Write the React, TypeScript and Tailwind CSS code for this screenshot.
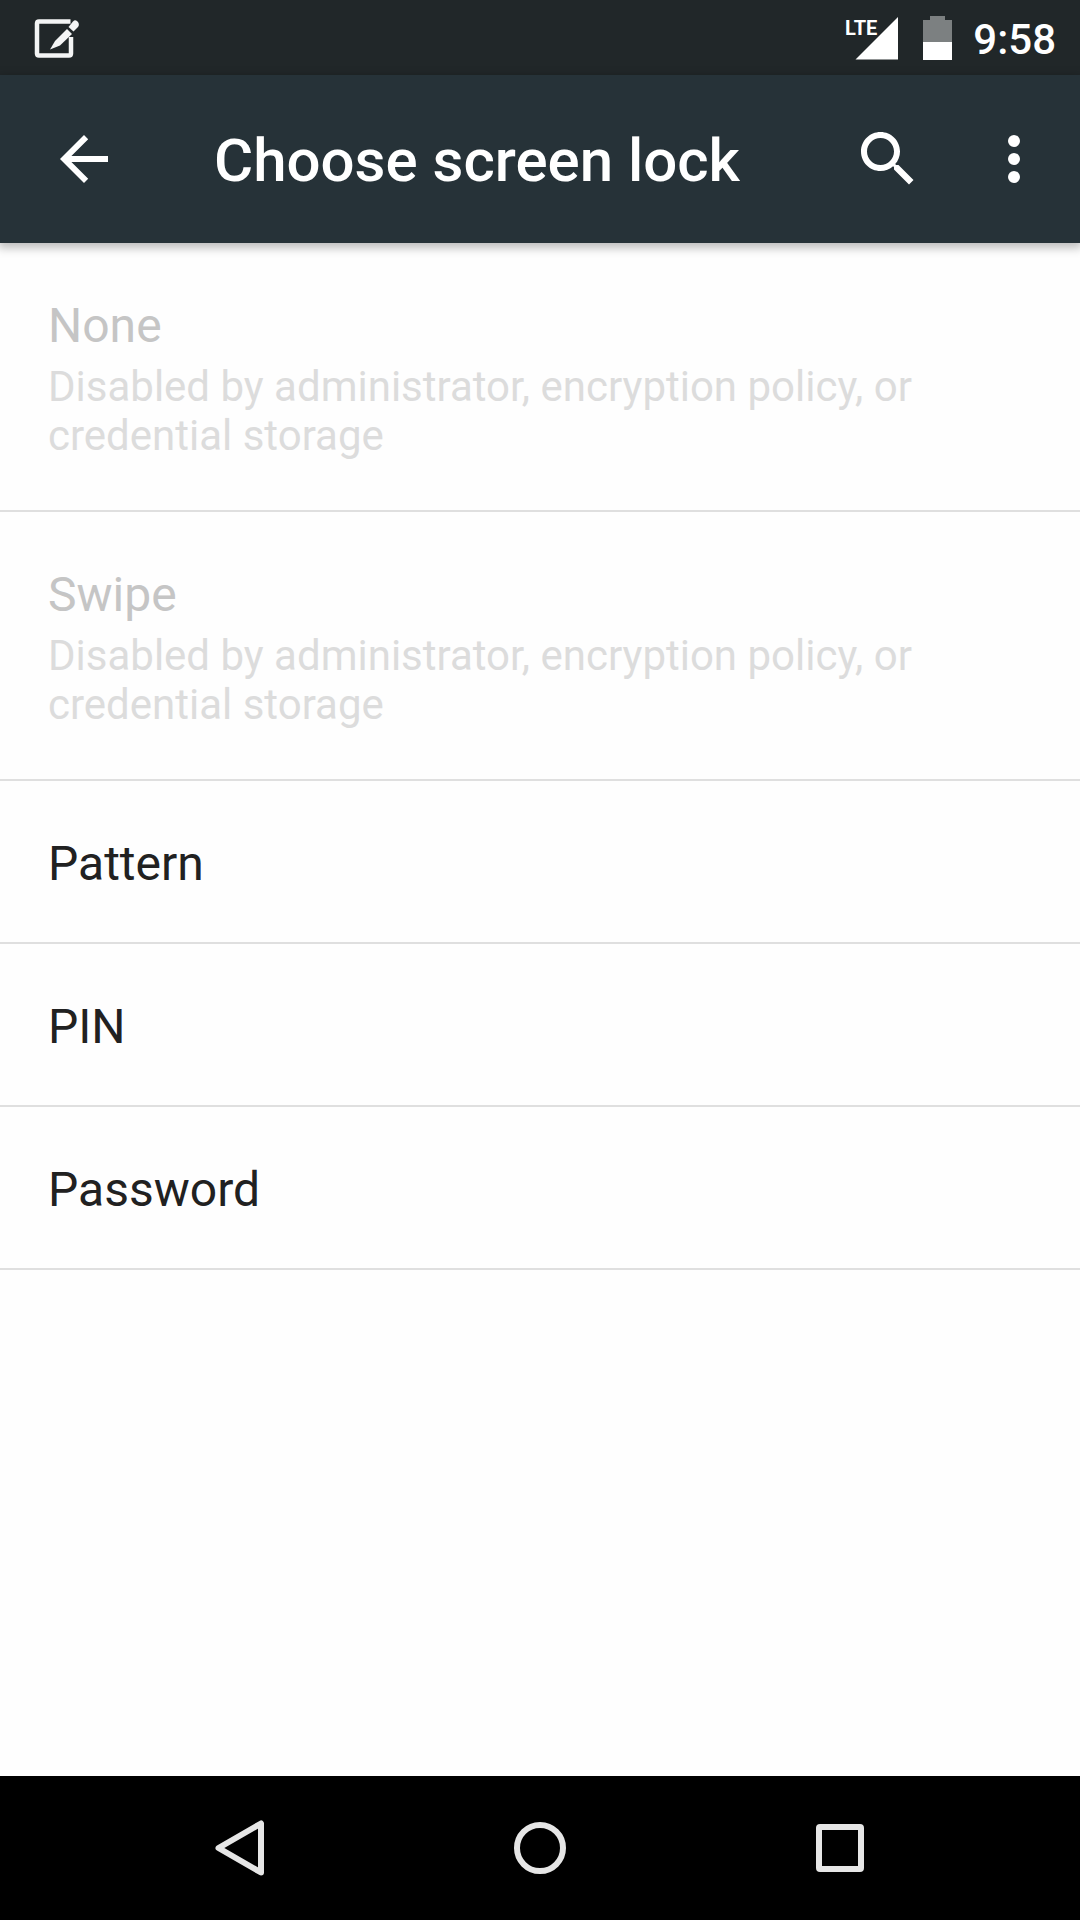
import { useState } from 'react';

const options = [
  { title: 'None', disabled: true },
  { title: 'Swipe', disabled: true },
  { title: 'Pattern', disabled: false },
  { title: 'PIN', disabled: false },
  { title: 'Password', disabled: false },
];

function StatusBar() {
  return (
    <div className="flex h-[75px] shrink-0 items-center justify-between bg-[#212729] pl-[30px] pr-6 text-white">
      <EditIcon />
      <div className="flex items-center">
        <span className="-mr-[22px] mb-[20px] text-[20px] leading-none font-bold">LTE</span>
        <SignalIcon />
        <BatteryIcon />
        <span className="ml-[21px] pt-1 text-[42px] leading-[49px] font-medium">9:58</span>
      </div>
    </div>
  );
}

function EditIcon() {
  return (
    <svg className="size-[54px]" viewBox="0 0 54 54" fill="none">
      <path
        d="M40.5 10.5H9Q7 10.5 7 12.5V42.5Q7 44.5 9 44.5H39Q41 44.5 41 42.5V26"
        stroke="#f4f5f5"
        strokeWidth="4.5"
      />
      <path d="M20 38.500L25 30L37 18L42 23L30 34.500Z" fill="#f4f5f5" />
      <path d="M38.500 16L43 10.500Q45.500 8 48 11Q50 14 47.500 16.500L43.500 20.500Z" fill="#f4f5f5" />
    </svg>
  );
}

function SignalIcon() {
  return (
    <svg className="h-[44px] w-[44px]" viewBox="0 0 44 44">
      <path d="M0.5 43.5H43V1Z" fill="white" />
    </svg>
  );
}

function BatteryIcon() {
  return (
    <svg className="ml-6 h-[44px] w-[29px]" viewBox="0 0 29 44">
      <path d="M7 0H22V4H29V26H0V4H7Z" fill="#7c8081" />
      <path d="M0 26H29V44H0Z" fill="white" />
    </svg>
  );
}

function AppBar() {
  return (
    <header className="z-10 flex h-[168px] shrink-0 items-center bg-[#263238] pl-12 pr-[30px] text-white shadow-[0_3px_9px_2px_rgba(0,0,0,0.26)]">
      <button aria-label="Back">
        <svg className="size-[72px]" viewBox="0 0 24 24" fill="currentColor">
          <path d="M20 11H7.8l5.6-5.6L12 4l-8 8 8 8 1.4-1.4L7.8 13H20v-2z" />
        </svg>
      </button>
      <h1 className="ml-[94px] flex-1 pt-1 text-[60px] leading-[70px] font-medium">
        Choose screen lock
      </h1>
      <button aria-label="Search">
        <svg className="size-[72px]" viewBox="0 0 24 24" fill="currentColor">
          <path d="M15.5 14h-.8l-.3-.3c1-1.100 1.600-2.600 1.600-4.200C16 5.900 13.100 3 9.500 3S3 5.900 3 9.500 5.900 16 9.500 16c1.600 0 3.100-.6 4.200-1.600l.3.3v.8l5 5 1.500-1.500-5-5zm-6 0C7 14 5 12 5 9.500S7 5 9.500 5 14 7 14 9.500 12 14 9.500 14z" />
        </svg>
      </button>
      <button aria-label="More options" className="ml-[54px]">
        <svg className="size-[72px]" viewBox="0 0 24 24" fill="currentColor">
          <circle cx="12" cy="6" r="2" />
          <circle cx="12" cy="12" r="2" />
          <circle cx="12" cy="18" r="2" />
        </svg>
      </button>
    </header>
  );
}

function LockOption({
  title,
  disabled,
  onClick,
}: {
  title: string;
  disabled: boolean;
  onClick: () => void;
}) {
  return (
    <li className="border-b-2 border-[#dfdfdf]">
      <button
        disabled={disabled}
        onClick={onClick}
        className="block w-full px-12 pt-[55px] pb-[50px] text-left text-[#212121] disabled:text-[#c5c5c5]"
      >
        <span className="block text-[48px] leading-[56px]">{title}</span>
        {disabled && (
          <span className="mt-2 block text-[42px] leading-[49px] text-[#dcdcdc]">
            Disabled by administrator, encryption policy, or credential storage
          </span>
        )}
      </button>
    </li>
  );
}

function NavBar() {
  return (
    <nav className="flex h-36 shrink-0 items-center bg-black px-[90px] text-[#e6e6e6]">
      <button aria-label="Back" className="flex flex-1 justify-center">
        <svg className="size-[72px]" viewBox="0 0 72 72" fill="none">
          <path
            d="M14.5 36L57 11.5V60.5Z"
            stroke="currentColor"
            strokeWidth="6"
            strokeLinejoin="round"
          />
        </svg>
      </button>
      <button aria-label="Home" className="flex flex-1 justify-center">
        <svg className="size-[72px]" viewBox="0 0 72 72" fill="none">
          <circle cx="36" cy="36" r="23" stroke="currentColor" strokeWidth="6" />
        </svg>
      </button>
      <button aria-label="Recent apps" className="flex flex-1 justify-center">
        <svg className="size-[72px]" viewBox="0 0 72 72" fill="none">
          <rect
            x="15"
            y="15"
            width="42"
            height="42"
            rx="1"
            stroke="currentColor"
            strokeWidth="6"
          />
        </svg>
      </button>
    </nav>
  );
}

export default function App() {
  const [, setSelected] = useState('');

  return (
    <div className="flex min-h-screen flex-col bg-[#fefefe] font-[Roboto,sans-serif]">
      <StatusBar />
      <AppBar />
      <main className="flex-1">
        <ul>
          {options.map((option) => (
            <LockOption
              key={option.title}
              title={option.title}
              disabled={option.disabled}
              onClick={() => setSelected(option.title)}
            />
          ))}
        </ul>
      </main>
      <NavBar />
    </div>
  );
}
